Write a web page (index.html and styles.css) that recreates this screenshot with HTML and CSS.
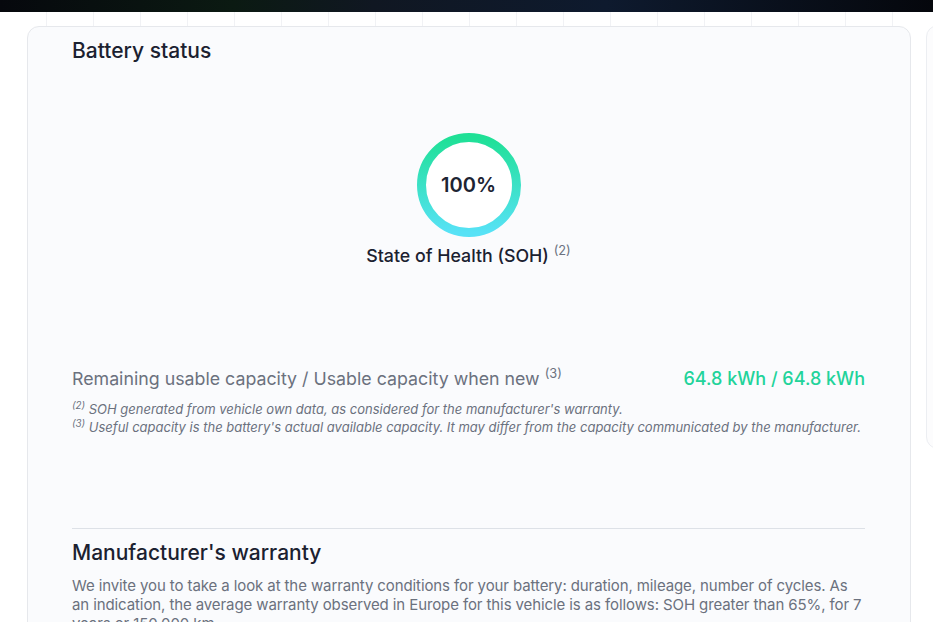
FILE: index.html
```html
<!DOCTYPE html>
<html>
<head>
<meta charset="utf-8">
<link rel="stylesheet" href="styles.css">
</head>
<body>
<div class="hero"></div>
<div class="page">
  <div class="side-card"></div>
  <section class="card">
    <h2 class="title">Battery status</h2>
    <div class="gauge-wrap">
      <div class="gauge">
        <svg width="106" height="106" viewBox="0 0 106 106">
          <defs>
            <linearGradient id="g" x1="0" y1="0" x2="0" y2="1">
              <stop offset="0" stop-color="#1fe096"/>
              <stop offset="1" stop-color="#57e2f6"/>
            </linearGradient>
          </defs>
          <circle cx="53" cy="53" r="47.5" fill="#fff" stroke="url(#g)" stroke-width="9"/>
        </svg>
        <span class="gauge-value">100%</span>
      </div>
      <div class="gauge-label">State of Health (SOH) <sup>(2)</sup></div>
    </div>
    <div class="cap-row">
      <span class="cap-label">Remaining usable capacity / Usable capacity when new <sup>(3)</sup></span>
      <span class="cap-value">64.8 kWh / 64.8 kWh</span>
    </div>
    <p class="note"><sup>(2)</sup> SOH generated from vehicle own data, as considered for the manufacturer's warranty.</p>
    <p class="note"><sup>(3)</sup> Useful capacity is the battery's actual available capacity. It may differ from the capacity communicated by the manufacturer.</p>
    <hr class="divider">
    <h2 class="title">Manufacturer's warranty</h2>
    <p class="para">We invite you to take a look at the warranty conditions for your battery: duration, mileage, number of cycles. As an indication, the average warranty observed in Europe for this vehicle is as follows: SOH greater than 65%, for 7 years or 150,000 km.</p>
  </section>
</div>
</body>
</html>
```
FILE: styles.css
```css
html, body {
  margin: 0;
  padding: 0;
  background: #ffffff;
  font-family: Inter, "Noto Sans", Arial, sans-serif;
  overflow: hidden;
  height: 622px;
}
.hero {
  height: 12px;
  background: linear-gradient(90deg, #06080d 0%, #0b1a12 25%, #101722 40%, #0e1a2e 65%, #05070c 100%);
}
.page {
  position: relative;
  padding: 14px 0 0 27px;
  background-image: repeating-linear-gradient(90deg, transparent 0 46px, #f1f2f5 46px 47px);
  background-size: 100% 14px;
  background-repeat: no-repeat;
}
.side-card {
  position: absolute;
  left: 926px;
  top: 13px;
  width: 40px;
  height: 422px;
  border: 1px solid #eceef2;
  border-radius: 12px;
  background: #fcfcfd;
}
.card {
  width: 793px;
  border: 1px solid #e6e8ec;
  border-radius: 12px;
  background: #fafbfd;
  padding: 11px 45px 40px 44px;
  box-sizing: content-box;
}
.title {
  margin: 0;
  font-size: 21px;
  line-height: 26px;
  font-weight: 500;
  color: #1b2130;
}
.gauge-wrap {
  display: flex;
  flex-direction: column;
  align-items: center;
  margin-top: 68px;
}
.gauge {
  position: relative;
  width: 106px;
  height: 106px;
}
.gauge svg { display: block; }
.gauge-value {
  position: absolute;
  inset: 0;
  display: flex;
  align-items: center;
  justify-content: center;
  font-size: 20px;
  font-weight: 600;
  color: #1d2433;
}
.gauge-label {
  margin-top: 7px;
  font-size: 17.8px;
  line-height: 22px;
  font-weight: 500;
  color: #1b2130;
}
sup {
  font-size: 0.72em;
  color: #6b7280;
  font-weight: 400;
  vertical-align: 0.55em;
  line-height: 0;
}
.cap-row {
  display: flex;
  justify-content: space-between;
  align-items: baseline;
  margin-top: 101px;
  font-size: 17.8px;
  line-height: 22px;
}
.cap-label { color: #6b717e; }
.cap-value { color: #22d39a; font-weight: 500; font-size: 18px; }
.note {
  margin: 0;
  font-size: 13px;
  line-height: 18px;
  font-style: italic;
  color: #6b717e;
}
.cap-row + .note { margin-top: 10px; }
.note sup { font-size: 0.75em; }
.divider {
  margin: 92px 0 11px 0;
  border: 0;
  border-top: 1px solid #dde1e7;
}
.para {
  margin: 10px 0 0 0;
  font-size: 15px;
  line-height: 19px;
  letter-spacing: -0.1px;
  color: #6b717e;
}
```
